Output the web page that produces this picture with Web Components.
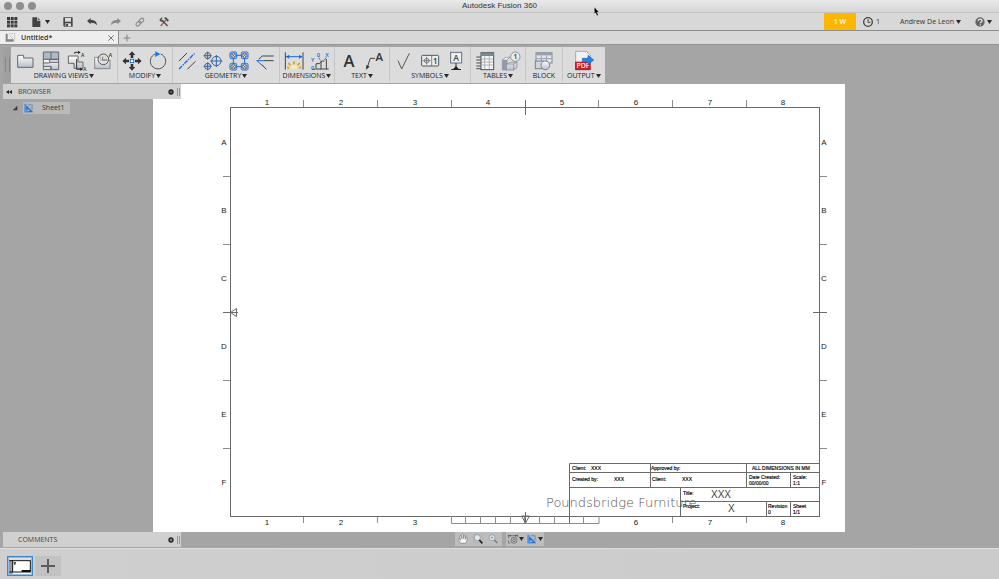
<!DOCTYPE html>
<html lang="en">
<head>
<meta charset="utf-8">
<title>Autodesk Fusion 360</title>
<style>
  html, body {
    height: 100%;
    margin: 0;
  }

  body {
    font-family: "Open Sans", "Noto Sans", sans-serif;
    font-size: 7px;
    line-height: 10px;
    color: #333;
    background: #a5a5a5;
  }
</style>
</head>
<body>
<fusion-app></fusion-app>

<script>
// Every icon is drawn at three units per pixel: 36 units for small ones, 60 for the ribbon
const SMALL_ICONS = {
  grid: `<g fill="#3c3c3c">${[3, 14, 25].map(y => [3, 14, 25].map(x => `<rect x="${x}" y="${y}" width="9" height="9"/>`).join('')).join('')}</g>`,
  file: `<path d="M7 4h14v10h10v19H7z" fill="#444"/><path d="M23 4l8 8h-8z" fill="#666"/>`,
  save: `<path d="M4 4h28v28H7l-3-3z" fill="#484848"/><path d="M9 6h18v11H9z" fill="#ddd"/><path d="M10 22h17v9H10z" fill="#ddd"/><path d="M12 24h6v7h-6z" fill="#484848"/>`,
  undo: `<path d="M3 15L14 6v6c12 0 19 5 19 16-4-6-9-8-19-8v5z" fill="#444"/>`,
  redo: `<path d="M33 15L22 6v6C10 12 3 17 3 28c4-6 9-8 19-8v5z" fill="#8a8a8a"/>`,
  link: `<g fill="none" stroke="#858585" stroke-width="3" transform="rotate(-45 18 18)"><rect x="3" y="13" width="17" height="10" rx="5"/><rect x="15" y="13" width="17" height="10" rx="5"/></g>`,
  tools: `<path d="M8 30L25 11" stroke="#a65b45" stroke-width="4"/><path d="M11 12l18 18" stroke="#4d4d4d" stroke-width="4"/><path d="M4 11l7-7 2 3-3 4 3 3 5-2-5 6-6-2z" fill="#4d4d4d"/><path d="M17 6l7-2 9 9-4 4-8-9z" fill="#4d4d4d"/>`,
  clock: `<circle cx="18" cy="18" r="13" fill="none" stroke="#444" stroke-width="4"/><path d="M18 10v9h7" fill="none" stroke="#444" stroke-width="3"/>`,
  help: `<circle cx="18" cy="18" r="14" fill="#666"/><path d="M13 15c0-8 11-7 11-1 0 4-5 4-5 8" fill="none" stroke="#e4e4e4" stroke-width="4"/><circle cx="19" cy="27" r="2" fill="#e4e4e4"/>`,
  drawing: `<path d="M2 5h6v17h18v7H2z" fill="#858585"/><path d="M12 5h17v21" fill="none" stroke="#999" stroke-width="2" stroke-dasharray="3 2"/><path d="M14 11l11 11" stroke="#aaa" stroke-width="2"/>`,
  close: `<path d="M10 10l16 16M26 10L10 26" stroke="#777" stroke-width="3"/>`,
  add: `<path d="M18 8v20M8 18h20" stroke="#808080" stroke-width="3"/>`,
  collapse: `<path d="M18 12v12l-9-6zM27 12v12l-9-6z" fill="#222"/>`,
  options: `<circle cx="18" cy="18" r="8" fill="#222"/><path d="M14 18h8" stroke="#ccc" stroke-width="2"/>`,
  optionsAdd: `<circle cx="18" cy="18" r="8" fill="#222"/><path d="M14 18h8M18 14v8" stroke="#ccc" stroke-width="2"/>`,
  expanded: `<path d="M25 11v14H11z" fill="#333"/><path d="M21 19v3h-3z" fill="#aaa"/>`,
  sheet: `<rect x="5" y="5" width="26" height="26" fill="#a9b6c6"/><path d="M5 5l26 26H5z" fill="#2a6fc4"/><path d="M5 5h5v18h5v8H5z" fill="#4798e8"/><path d="M14 20v7h7z" fill="#b9c7d7"/><path d="M27 7v16M15 8h10" stroke="#66798f" stroke-width="2"/>`,
  pan: `<path d="M11 31C7 25 4 22 4 19c2-3 5 0 7 3L8 10c0-3 4-3 5 0l2 7-1-12c1-3 4-3 5 0l1 12 2-10c1-3 5-2 4 1l-1 11 2-5c2-3 5-1 4 2-2 9-3 12-6 15z" fill="#f4f4f4" stroke="#777" stroke-width="2"/>`,
  zoomWindow: `<rect x="5" y="4" width="26" height="25" fill="none" stroke="#8a8a8a" stroke-width="1" stroke-dasharray="3 2"/><circle cx="16" cy="14" r="9" fill="#dcebf3" stroke="#888" stroke-width="2"/><path d="M22 21l9 10" stroke="#222" stroke-width="5"/>`,
  zoom: `<circle cx="15" cy="14" r="9" fill="#dcebf3" stroke="#888" stroke-width="2"/><path d="M15 10v8M11 14h8" stroke="#6686a0" stroke-width="2"/><path d="M22 21l9 9" stroke="#777" stroke-width="4"/>`,
  display: `<g fill="none" stroke="#5a5a5a" stroke-width="2"><path d="M4 4v12M32 4v8M5 8h26M4 22v8h7"/><circle cx="21" cy="22" r="9"/><circle cx="21" cy="22" r="4"/></g><path d="M5 8l6-3v6zM31 8l-6-3v6z" fill="#444"/>`
};

const STEEL = `<linearGradient id="steel" x2="0" y2="1"><stop offset="0" stop-color="#fff"/><stop offset="1" stop-color="#b9bfc9"/></linearGradient>`;
const BALLOON_FONT = `font-family="Open Sans, sans-serif" font-weight="600"`;

const RIBBON_ICONS = {
  base: `<path d="M8 13h18v8h28v28H8z" fill="url(#steel)" stroke="#666" stroke-width="3"/>`,
  projected: `<g stroke="#62666c" stroke-width="3"><path d="M7 3h46v22H7z" fill="#aeb9c8"/><path d="M30 3v22"/><path d="M7 25h19v9h27v22H30V46H7z" fill="url(#steel)"/><path d="M7 46v10h23V46M26 25h27v9M7 36h19" fill="none"/></g>`,
  section: `<path d="M4 15h29v18h15v19H21V37H4z" fill="url(#steel)" stroke="#666" stroke-width="3"/><path d="M23 8v-4h14M29 24v31h16" fill="none" stroke="#333" stroke-width="3"/><path d="M33 0l8 4-8 5zM40 50l8 5-8 5z" fill="#222"/><text x="42" y="17" font-size="15" fill="#333" ${BALLOON_FONT}>A</text><text x="49" y="59" font-size="14" fill="#333" ${BALLOON_FONT}>A</text>`,
  detail: `<path d="M5 19h17v9h29v25H5z" fill="url(#steel)" stroke="#888" stroke-width="3"/><circle cx="31" cy="25" r="16" fill="#dddddd" fill-opacity=".5" stroke="#555" stroke-width="3"/><path d="M29 17v10h13" fill="none" stroke="#777" stroke-width="3"/><text x="47" y="17" font-size="15" fill="#333" ${BALLOON_FONT}>A</text>`,
  move: `<path d="M30 1l10 11h-6v9h-8v-9h-6zM30 59l10-11h-6v-9h-8v9h-6zM1 30l11-10v6h9v8h-9v6zM59 30L48 20v6h-9v8h9v6z" fill="#333"/><rect x="25" y="25" width="10" height="10" fill="#fff" stroke="#1c72e8" stroke-width="3"/>`,
  rotate: `<path d="M38 9a23 23 0 1 1-16 0" fill="none" stroke="#555" stroke-width="3"/><path d="M22 1l15 8-15 9z" fill="#0879ff"/>`,
  centerline: `<path d="M6 30L30 6M31 55l24-24" stroke="#444" stroke-width="3"/><path d="M6 54L54 6" stroke="#1268e5" stroke-width="4" stroke-dasharray="13 3 4 3"/>`,
  centermark: `<g fill="none" stroke="#505b66" stroke-width="3"><circle cx="14" cy="14" r="9"/><circle cx="14" cy="46" r="9"/><circle cx="40" cy="30" r="14"/></g><path d="M14 2v24M2 14h24M14 34v24M2 46h24M40 12v36M22 30h36" stroke="#1d66c8" stroke-width="3"/>`,
  pattern: `<rect x="13" y="13" width="34" height="34" rx="4" fill="none" stroke="#176be0" stroke-width="3"/>${[[13, 13], [47, 13], [13, 47], [47, 47]].map(([x, y]) => `<rect x="${x - 10}" y="${y - 10}" width="20" height="20" rx="4" fill="#dcdcdc" stroke="#176be0" stroke-width="3"/><circle cx="${x}" cy="${y}" r="7" fill="none" stroke="#3e4d5d" stroke-width="2"/><path d="M${x - 6} ${y - 6}l12 12m0-12l-12 12" stroke="#3e4d5d" stroke-width="2"/>`).join('')}`,
  edge: `<path d="M11 25L22 15h34M25 29h31M20 40l14 15" fill="none" stroke="#444" stroke-width="3"/><path d="M4 29h21M6 29l22 20" stroke="#176be0" stroke-width="3"/>`,
  dimension: `<path d="M4 4v52M57 4v52" stroke="#444" stroke-width="3"/><path d="M6 17h49" stroke="#176be0" stroke-width="3"/><path d="M6 17l10-6v12zM55 17l-10-6v12z" fill="#176be0"/><path d="M20 53a10 10 0 0 1 20 0z" fill="#f8eda5"/><path d="M15 52l-5-4M19 43l-6-7M30 40v-9M41 43l6-7M45 52l6-4" stroke="#eaa000" stroke-width="5"/>`,
  ordinate: `<path d="M6 55h10M18 38h10l7-8h8M18 54V39M33 55V31M49 55V24M18 54h38" fill="none" stroke="#444" stroke-width="3"/><g font-size="17" fill="#176be0" ${BALLOON_FONT}><text x="20" y="17">0</text><text x="46" y="17">X</text><text x="3" y="33">Y</text><text x="3" y="57">0</text></g><path d="M26 19l5 9M49 19l-7 9" stroke="#444" stroke-width="2"/>`,
  text: `<text x="30" y="49" font-size="50" text-anchor="middle" fill="#333" ${BALLOON_FONT}>A</text>`,
  leader: `<path d="M8 46l8-24h14" fill="none" stroke="#444" stroke-width="3"/><path d="M3 56l1-14 10 5z" fill="#333"/><text x="43" y="31" font-size="34" text-anchor="middle" fill="#333" ${BALLOON_FONT}>A</text>`,
  surface: `<path d="M12 29l11 25L46 7" fill="none" stroke="#555" stroke-width="3"/>`,
  frame: `<rect x="5" y="13" width="51" height="32" rx="3" fill="#e9edf0" stroke="#555" stroke-width="3"/><path d="M35 13v32M20 17v24M8 29h24" stroke="#555" stroke-width="2"/><circle cx="20" cy="29" r="7" fill="none" stroke="#555" stroke-width="2"/><text x="46" y="38" font-size="24" text-anchor="middle" fill="#333" ${BALLOON_FONT}>1</text>`,
  datum: `<rect x="14" y="4" width="33" height="32" fill="#edf0f2" stroke="#657080" stroke-width="3"/><text x="30" y="29" font-size="26" text-anchor="middle" fill="#444" ${BALLOON_FONT}>A</text><path d="M30 36v13" stroke="#333" stroke-width="3"/><path d="M30 45l9 10H21zM16 54h29v3H16z" fill="#222"/>`,
  table: `<rect x="18" y="5" width="38" height="51" fill="#f3f5f7" stroke="#4a4f55" stroke-width="3"/><path d="M18 5h38v10H18z" fill="#7c8693"/><path d="M19 24h36M19 33h36M19 42h36M29 15v40M43 15v40" stroke="#9199a3" stroke-width="2"/><path d="M4 18h14M4 27h14M4 36h14M4 45h14M4 53h14" stroke="#4a4f55" stroke-width="3"/>`,
  balloon: `<path d="M4 26l11-7h12l-9 7v13l10-5h20v16l-9 7H4z" fill="url(#steel)" stroke="#7d8590" stroke-width="2"/><path d="M4 26h14v31H4z" fill="#929aa5"/><path d="M18 39h20v18M38 39l10-5" fill="none" stroke="#7d8590" stroke-width="2"/><circle cx="43" cy="17" r="14" fill="#ececec" stroke="#666" stroke-width="2"/><text x="43" y="25" font-size="23" text-anchor="middle" fill="#444" ${BALLOON_FONT}>1</text>`,
  block: `<rect x="6" y="5" width="48" height="31" fill="#e2e6eb" stroke="#838b97" stroke-width="3"/><path d="M6 5h48v8H6z" fill="#98a1ae"/><path d="M6 23h48M22 13v23M38 13v23" stroke="#98a1ae" stroke-width="3"/><rect x="4" y="30" width="25" height="23" fill="#d0d5dc" stroke="#78808d" stroke-width="3"/><circle cx="34" cy="43" r="13" fill="url(#steel)" stroke="#78808d" stroke-width="3"/>`,
  pdf: `<path d="M5 1h32l12 11v45H5z" fill="#f1f1f1" stroke="#8b8b8b" stroke-width="2"/><path d="M3 32h47v25H3z" fill="#d51920"/><text x="27" y="52" font-size="21" text-anchor="middle" fill="#fff" ${BALLOON_FONT}>PDF</text><path d="M25 22h17V13l17 14-17 14v-9H25z" fill="#2384e5" stroke="#1761b3" stroke-width="2"/>`
};

class FusionElement extends HTMLElement {
  connectedCallback() {
    this.initShadow();
  }

  initShadow() {
    let shadowRoot = this.attachShadow({mode: 'open'});
    shadowRoot.innerHTML = FusionElement.base + this.constructor.style + this.template;

    return shadowRoot;
  }

  static get base() {
    return `
      <style>
          * {
            box-sizing: border-box;
          }

          button {
            display: flex;
            align-items: center;
            justify-content: center;
            margin: 0;
            padding: 0;
            border: 0;
            background: none;
            color: inherit;
            font: inherit;
            white-space: nowrap;
          }
      </style>
    `;
  }
}

class FusionIcon extends FusionElement {
  get template() {
    let name = this.getAttribute('name');
    let large = name in RIBBON_ICONS;
    let size = large ? 20 : 12;

    return `
      <svg width="${size}" height="${size}" viewBox="0 0 ${size * 3} ${size * 3}" aria-hidden="true">
        ${large ? `<defs>${STEEL}</defs>` : ''}
        ${large ? RIBBON_ICONS[name] : SMALL_ICONS[name]}
      </svg>
    `;
  }

  static get style() {
    return `
      <style>
          :host {
            display: block;
            flex: none;
          }

          svg {
            display: block;
            overflow: visible;
          }
      </style>
    `;
  }
}

class FusionCaret extends FusionElement {
  get template() {
    return `<svg width="5" height="4" viewBox="0 0 10 8" aria-hidden="true"><path d="M0 0h10L5 8z" fill="#2b2b2b"/></svg>`;
  }

  static get style() {
    return `
      <style>
          :host {
            display: block;
            flex: none;
          }

          svg {
            display: block;
          }
      </style>
    `;
  }
}

class FusionTitlebar extends FusionElement {
  get template() {
    return `
      <div class="lights">
        <button aria-label="Close"></button>
        <button aria-label="Minimize"></button>
        <button aria-label="Zoom"></button>
      </div>
      <div class="title"><slot></slot></div>
      <svg class="pointer" width="5" height="9" viewBox="0 0 15 27" aria-hidden="true">
        <path d="M1 0v21l4-4 4 9 4-2-4-8h6z" fill="#000" stroke="#fff" stroke-width="1"/>
      </svg>
    `;
  }

  static get style() {
    return `
      <style>
          :host {
            position: relative;
            display: grid;
            grid-template-columns: 1fr auto 1fr;
            align-items: center;
            height: 13px;
            border-bottom: 1px solid #c2c2c2;
            background: linear-gradient(#eaeaea, #d6d6d6);
            box-sizing: border-box;
          }

          .lights {
            display: flex;
            gap: 4px;
            padding-left: 4px;
          }

          .lights button {
            width: 8px;
            height: 8px;
            border-radius: 50%;
            background: #8f8f8f;
          }

          .title {
            font-family: "Liberation Sans", Arial, sans-serif;
            font-size: 8px;
          }

          .pointer {
            position: absolute;
            top: 7px;
            left: calc(50% + 94px);
            z-index: 1;
          }
      </style>
    `;
  }
}

class FusionQuickbar extends FusionElement {
  get template() {
    return `
      <nav>
        <button aria-label="Data panel"><fusion-icon name="grid"></fusion-icon></button>
        <button aria-label="File"><fusion-icon name="file"></fusion-icon><fusion-caret></fusion-caret></button>
        <button aria-label="Save"><fusion-icon name="save"></fusion-icon></button>
        <button aria-label="Undo"><fusion-icon name="undo"></fusion-icon></button>
        <button aria-label="Redo"><fusion-icon name="redo"></fusion-icon></button>
        <button aria-label="Link"><fusion-icon name="link"></fusion-icon></button>
        <button aria-label="Preferences"><fusion-icon name="tools"></fusion-icon></button>
      </nav>
      <div class="account">
        <button class="trial">1 W</button>
        <button class="jobs"><fusion-icon name="clock"></fusion-icon>1</button>
        <button class="user">Andrew De Leon<fusion-caret></fusion-caret></button>
        <button class="help" aria-label="Help"><fusion-icon name="help"></fusion-icon><fusion-caret></fusion-caret></button>
      </div>
    `;
  }

  static get style() {
    return `
      <style>
          :host {
            display: flex;
            justify-content: space-between;
            height: 18px;
            border-bottom: 1px solid #8e8e8e;
            background: #d8d8d8;
            box-sizing: border-box;
          }

          nav {
            display: flex;
            align-items: center;
            gap: 12px;
            padding-left: 6px;
          }

          nav button:nth-child(2) {
            gap: 3px;
          }

          .account {
            display: flex;
            align-items: stretch;
            padding-right: 7px;
          }

          .trial {
            width: 32px;
            background: #ffb600;
            color: #fff;
            font-weight: 600;
          }

          .jobs {
            gap: 2px;
            padding-left: 6px;
          }

          .user {
            gap: 2px;
            padding-left: 20px;
          }

          .help {
            gap: 1px;
            padding-left: 13px;
          }
      </style>
    `;
  }
}

class FusionTabs extends FusionElement {
  get template() {
    return `
      <div class="tab">
        <fusion-icon name="drawing"></fusion-icon>
        <span><slot></slot></span>
        <button aria-label="Close tab"><fusion-icon name="close"></fusion-icon></button>
      </div>
      <button aria-label="New tab"><fusion-icon name="add"></fusion-icon></button>
    `;
  }

  static get style() {
    return `
      <style>
          :host {
            display: flex;
            height: 13px;
            background: #d8d8d8;
          }

          .tab {
            display: flex;
            align-items: center;
            gap: 4px;
            width: 119px;
            padding: 0 1px 0 5px;
            border-right: 1px solid #8e8e8e;
            background: #eee;
            font-weight: 600;
          }

          .tab span {
            flex: 1;
          }

          :host > button {
            width: 16px;
          }
      </style>
    `;
  }
}

class FusionGroup extends FusionElement {
  get template() {
    let icons = this.getAttribute('icons').split(' ');
    let label = this.getAttribute('label');

    return `
      <div class="icons">
        ${icons.map(icon => `<button aria-label="${icon}"><fusion-icon name="${icon}"></fusion-icon></button>`).join('')}
      </div>
      <button class="label">${label}${this.hasAttribute('plain') ? '' : '<fusion-caret></fusion-caret>'}</button>
    `;
  }

  static get style() {
    return `
      <style>
          :host {
            display: flex;
            flex-direction: column;
            align-items: center;
            padding: 4px 4px 0;
            border-right: 1px solid #c6c6c6;
          }

          :host(:last-child) {
            border-right: 0;
          }

          .icons {
            display: flex;
            gap: 6px;
          }

          /* long labels may run into the group's padding */
          .label {
            gap: 1px;
            margin: 0 -4px;
            color: #222;
          }
      </style>
    `;
  }
}

class FusionRibbon extends FusionElement {
  get template() {
    return `
      <div class="grip"></div>
      <div class="groups"><slot></slot></div>
    `;
  }

  static get style() {
    return `
      <style>
          :host {
            display: flex;
            padding: 2px 3px 1px;
            border-top: 1px solid #969696;
            background: #a5a5a5;
          }

          .grip {
            display: flex;
            justify-content: center;
            align-items: center;
            width: 8px;
            background: #a0a0a0;
          }

          .grip::before {
            content: "";
            width: 3px;
            height: 14px;
            border: solid #858585;
            border-width: 0 1px;
          }

          .groups {
            display: flex;
            height: 36px;
            background: #dcdcdc;
          }

          ::slotted(.wide) {
            padding-left: 8px;
            padding-right: 8px;
          }
      </style>
    `;
  }
}

class FusionPanel extends FusionElement {
  get template() {
    let comments = this.hasAttribute('comments');

    return `
      <header>
        ${comments ? '<span class="blank"></span>' : '<button aria-label="Collapse"><fusion-icon name="collapse"></fusion-icon></button>'}
        <span class="name">${this.getAttribute('label')}</span>
        <button aria-label="Panel options"><fusion-icon name="${comments ? 'optionsAdd' : 'options'}"></fusion-icon></button>
        <i></i>
      </header>
      <slot></slot>
    `;
  }

  static get style() {
    return `
      <style>
          :host {
            display: block;
            width: 178px;
          }

          header {
            display: flex;
            align-items: center;
            height: 15px;
            padding-right: 1px;
            background: #d0d0d0;
            color: #444;
          }

          .blank {
            width: 12px;
          }

          .name {
            flex: 1;
            padding-left: 3px;
          }

          i {
            width: 3px;
            height: 8px;
            border: solid #999;
            border-width: 0 1px;
          }
      </style>
    `;
  }
}

class FusionTreeItem extends FusionElement {
  get template() {
    return `
      <button aria-label="Toggle"><fusion-icon name="expanded"></fusion-icon></button>
      <button class="node"><fusion-icon name="sheet"></fusion-icon><slot></slot></button>
    `;
  }

  static get style() {
    return `
      <style>
          :host {
            display: flex;
            align-items: center;
            gap: 2px;
            padding: 3px 6px;
          }

          .node {
            gap: 7px;
            height: 12px;
            padding-right: 5px;
            background: #bababa;
          }
      </style>
    `;
  }
}

// Drawing sheet: zoned border, centring marks, scale bar and title block
class DrawingSheet extends FusionElement {
  get template() {
    return `
      <svg viewBox="0 0 693 448" role="img" aria-label="Sheet1">
        <rect width="692" height="448" fill="#fff"/>
        <g class="lines">
          <rect x="77.5" y="23.5" width="589" height="409"/>
          <path class="ticks" d="${this.zones}"/>
          <path d="M372.500 16v15M70 228.500h15M660 228.500h14"/>
          <path d="M77.500 228.500l6-4v8zM372.500 439l-4-7h8zM372.500 428v11"/>
        </g>
        <g class="block">
          <path d="M416.500 439V379.500H667M416.500 388.500H667M416.500 403.500H667M527.500 417.500H667"/>
          <path d="M497.500 379v24M593.500 379v24M637.500 388v15M527.500 403v29M613.500 417v15M637.500 417v15"/>
        </g>
        <g class="zone">${this.zoneLabels}</g>
        <g class="small">
          <text x="419" y="386">Client:</text>
          <text x="438" y="386">XXX</text>
          <text x="498" y="386">Approved by:</text>
          <text x="599" y="386">ALL DIMENSIONS IN MM</text>
          <text x="419" y="397">Created by:</text>
          <text x="461" y="397">XXX</text>
          <text x="499" y="397">Client:</text>
          <text x="529" y="397">XXX</text>
          <text x="596" y="395">Date Created:</text>
          <text x="596" y="401">00/00/00</text>
          <text x="640" y="395">Scale:</text>
          <text x="640" y="401">1:1</text>
          <text x="530" y="411">Title:</text>
          <text x="530" y="424">Project:</text>
          <text x="615" y="424">Revision</text>
          <text x="615" y="430">0</text>
          <text x="640" y="424">Sheet</text>
          <text x="640" y="430">1/1</text>
        </g>
        <g class="value">
          <text x="558" y="414">XXX</text>
          <text x="575" y="428">X</text>
        </g>
        <text class="company" x="393" y="423">Poundsbridge Furniture</text>
      </svg>
    `;
  }

  get zones() {
    let d = '';
    for (let i = 1; i < 8; i++) {
      let x = Math.floor(77 + i * 590 / 8) + .5;
      d += `M${x} 16v7`;
      if (i < 3 || i > 5) d += `M${x} 433v6`;
    }
    for (let i = 1; i < 6; i++) {
      let y = 24.5 + i * 68;
      if (i !== 3) d += `M70 ${y}h7M667 ${y}h7`;
    }
    // scale bar, ten divisions
    d += 'M298.500 432v7.500h147.500v-7.500';
    for (let i = 1; i < 10; i++) {
      d += `M${Math.floor(298 + i * 14.75) + .5} 432v7`;
    }
    return d;
  }

  get zoneLabels() {
    let out = '';
    for (let i = 0; i < 8; i++) {
      let x = Math.round(114 + i * 590 / 8);
      out += `<text x="${x}" y="21">${i + 1}</text>`;
      // the scale bar covers zones 4 and 5 at the bottom
      if (i !== 3 && i !== 4) out += `<text x="${x}" y="441">${i + 1}</text>`;
    }
    'ABCDEF'.split('').forEach((letter, i) => {
      let y = 61 + i * 68;
      out += `<text x="71" y="${y}">${letter}</text><text x="671" y="${y}">${letter}</text>`;
    });
    return out;
  }

  static get style() {
    return `
      <style>
          :host {
            display: block;
            height: 100%;
          }

          svg {
            display: block;
            width: 100%;
            height: 100%;
            font-family: "Liberation Sans", Arial, sans-serif;
          }

          .lines, .block {
            fill: none;
            stroke: #6a6a6a;
            stroke-width: 1px;
          }

          .ticks {
            stroke: #8c8c8c;
          }

          .zone {
            font-size: 8px;
            text-anchor: middle;
            fill: #222;
          }

          .small {
            font-size: 5px;
            fill: #000;
            stroke: #000;
            stroke-width: .15px;
          }

          .value {
            font-size: 10px;
            fill: #444;
          }

          .company {
            font-family: "DejaVu Sans Light", "DejaVu Sans", sans-serif;
            font-size: 13px;
            font-weight: 200;
            fill: #555;
          }
      </style>
    `;
  }
}

class FusionNavbar extends FusionElement {
  get template() {
    return `
      <div>
        <button aria-label="Pan"><fusion-icon name="pan"></fusion-icon></button>
        <button aria-label="Zoom window"><fusion-icon name="zoomWindow"></fusion-icon></button>
        <button aria-label="Zoom"><fusion-icon name="zoom"></fusion-icon></button>
      </div>
      <div class="menus">
        <button aria-label="Display settings"><fusion-icon name="display"></fusion-icon><fusion-caret></fusion-caret></button>
        <button aria-label="Sheet settings"><fusion-icon name="sheet"></fusion-icon><fusion-caret></fusion-caret></button>
      </div>
    `;
  }

  static get style() {
    return `
      <style>
          :host {
            display: flex;
            gap: 4px;
          }

          div {
            display: flex;
            gap: 3px;
            height: 14px;
            padding: 0 3px 0 2px;
            background: #bdbdbd;
          }

          .menus {
            gap: 2px;
            padding: 0 1px;
          }
      </style>
    `;
  }
}

class FusionSheetbar extends FusionElement {
  get template() {
    return `
      <button class="thumb" aria-label="Sheet1">
        <svg width="22" height="16" viewBox="0 0 66 48" aria-hidden="true">
          <path d="M0 0h66v48H0z" fill="#9a9a9a"/>
          <path d="M0 0h66v6H0z" fill="#ddd"/>
          <path d="M11 6h55v42H11z" fill="#fff"/>
          <path d="M1 8h64M1 42h64M11 8v34M64 8v34" stroke="#111" stroke-width="3"/>
          <path d="M38 36h26v6H38zM14 13h7v3h-2v5h-3v-5h-2z" fill="#111"/>
        </svg>
      </button>
      <button class="add" aria-label="Add sheet">
        <svg width="14" height="14" viewBox="0 0 14 14" aria-hidden="true"><path d="M7 0v14M0 7h14" stroke="#5c5c5c" stroke-width="2"/></svg>
      </button>
    `;
  }

  static get style() {
    return `
      <style>
          :host {
            display: flex;
            gap: 2px;
            height: 31px;
            padding: 7px 7px 3px;
            border-top: 1px solid #dedede;
            background: linear-gradient(90deg, #cfcfcf, #cbcbcb);
            box-sizing: border-box;
          }

          .thumb {
            width: 26px;
            border: 1px solid #3d86c6;
            background: #8fbce2;
          }

          .add {
            width: 26px;
            background: #c2c2c2;
          }
      </style>
    `;
  }
}

class FusionApp extends FusionElement {
  get template() {
    return `
      <fusion-titlebar>Autodesk Fusion 360</fusion-titlebar>
      <fusion-quickbar></fusion-quickbar>
      <fusion-tabs>Untitled*</fusion-tabs>
      <fusion-ribbon>
        <fusion-group label="DRAWING VIEWS" icons="base projected section detail"></fusion-group>
        <fusion-group label="MODIFY" icons="move rotate"></fusion-group>
        <fusion-group label="GEOMETRY" icons="centerline centermark pattern edge"></fusion-group>
        <fusion-group label="DIMENSIONS" icons="dimension ordinate"></fusion-group>
        <fusion-group label="TEXT" icons="text leader"></fusion-group>
        <fusion-group label="SYMBOLS" icons="surface frame datum"></fusion-group>
        <fusion-group label="TABLES" icons="table balloon"></fusion-group>
        <fusion-group class="wide" label="BLOCK" icons="block" plain></fusion-group>
        <fusion-group class="wide" label="OUTPUT" icons="pdf"></fusion-group>
      </fusion-ribbon>
      <main>
        <drawing-sheet></drawing-sheet>
        <fusion-panel class="browser" label="BROWSER">
          <fusion-tree-item>Sheet1</fusion-tree-item>
        </fusion-panel>
      </main>
      <footer>
        <fusion-panel label="COMMENTS" comments></fusion-panel>
        <fusion-navbar></fusion-navbar>
      </footer>
      <fusion-sheetbar></fusion-sheetbar>
    `;
  }

  static get style() {
    return `
      <style>
          :host {
            display: flex;
            flex-direction: column;
            height: 100vh;
            overflow: hidden;
          }

          main {
            position: relative;
            flex: 1;
            min-height: 0;
          }

          /* floats over the sheet */
          .browser {
            position: absolute;
            top: 0;
            left: 3px;
          }

          footer {
            display: grid;
            grid-template-columns: 1fr auto 1fr;
            padding: 0 3px 1px;
          }
      </style>
    `;
  }
}

customElements.define('fusion-icon', FusionIcon);
customElements.define('fusion-caret', FusionCaret);
customElements.define('fusion-titlebar', FusionTitlebar);
customElements.define('fusion-quickbar', FusionQuickbar);
customElements.define('fusion-tabs', FusionTabs);
customElements.define('fusion-group', FusionGroup);
customElements.define('fusion-ribbon', FusionRibbon);
customElements.define('fusion-panel', FusionPanel);
customElements.define('fusion-tree-item', FusionTreeItem);
customElements.define('drawing-sheet', DrawingSheet);
customElements.define('fusion-navbar', FusionNavbar);
customElements.define('fusion-sheetbar', FusionSheetbar);
customElements.define('fusion-app', FusionApp);
</script>
</body>
</html>
